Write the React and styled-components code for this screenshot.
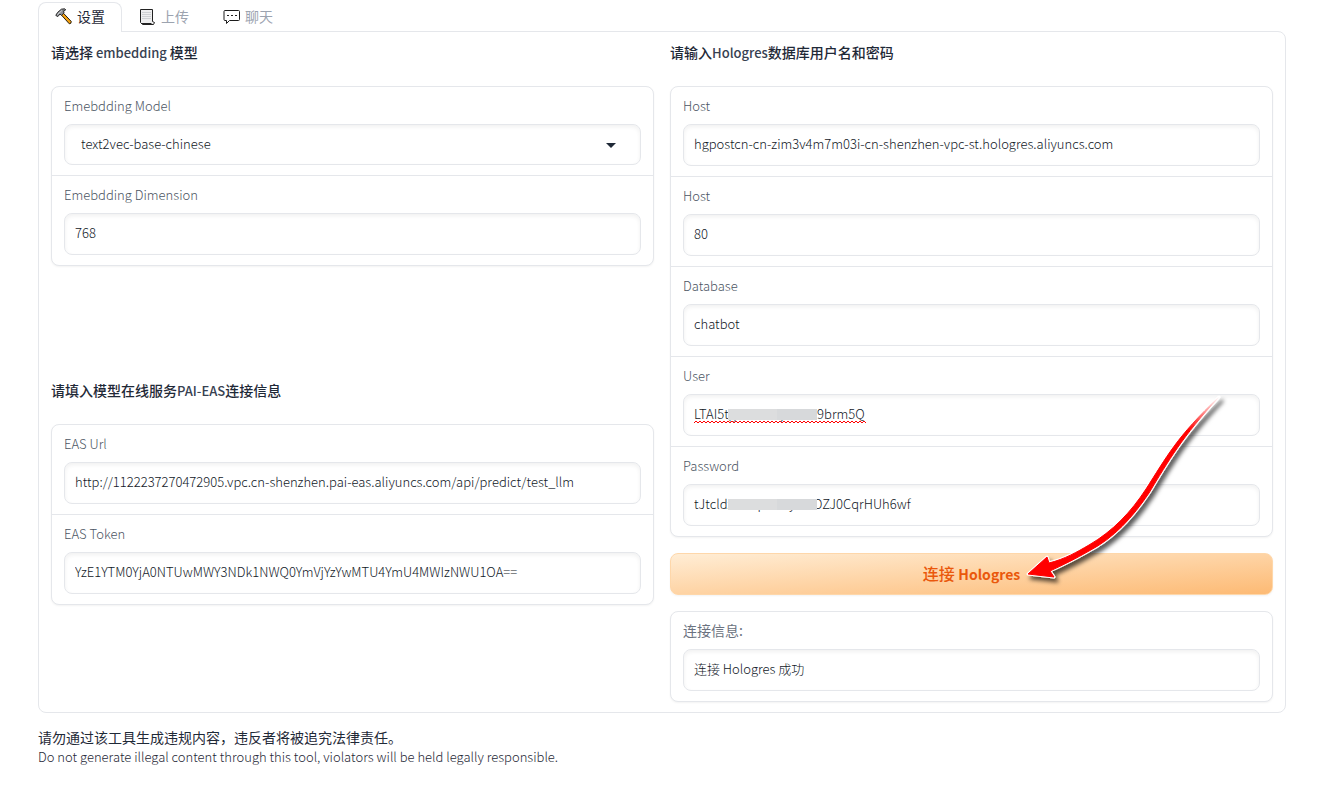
import React from "react";
import styled, { createGlobalStyle, css } from "styled-components";

const Global = createGlobalStyle`
  *, *::before, *::after { box-sizing: border-box; }
  body {
    margin: 0;
    background: #fff;
    color: #1f2937;
    font-family: "Noto Sans CJK SC", "Noto Sans", sans-serif;
    font-size: 14px;
    font-weight: 300;
    line-height: 20px;
  }
  button, input, select { font: inherit; color: inherit; margin: 0; }
`;

const Page = styled.main`
  padding: 2px 48px 32px 38px;
`;

const TabList = styled.div`
  display: flex;
`;

const Tab = styled.button`
  display: flex;
  align-items: center;
  gap: 5px;
  height: 30px;
  padding: 0 16px 3px;
  border: 1px solid ${(p) => (p.$active ? "#e5e7eb" : "transparent")};
  border-bottom: 0;
  border-radius: 8px 8px 0 0;
  background: ${(p) => (p.$active ? "#fff" : "transparent")};
  color: ${(p) => (p.$active ? "#1f2937" : "#9ca3af")};
  font-weight: 400;
  ${(p) => p.$active && css`
    position: relative;
    z-index: 1;
  `}
`;

const Panel = styled.section`
  display: grid;
  grid-template-columns: minmax(0, 1fr) minmax(0, 1fr);
  gap: 16px;
  margin-top: -1px;
  padding: 10px 12px;
  border: 1px solid #e5e7eb;
  border-radius: 0 8px 8px 8px;
`;

const Column = styled.div`
  display: flex;
  flex-direction: column;
  gap: 16px;
`;

const Group = styled.section`
  flex: ${(p) => (p.$grow ? "1 1 0" : "none")};
`;

const Heading = styled.h2`
  margin: 0 0 23px;
  font-size: 14px;
  line-height: 20px;
  font-weight: 500;
`;

const Latin = styled.span`
  font-size: 13px;
  color: #374151;
`;

const Card = styled.div`
  border: 1px solid #e5e7eb;
  border-radius: 8px;
  background: #fff;
  box-shadow: 0 1px 2px rgba(0, 0, 0, 0.05);
`;

const FieldRow = styled.div`
  display: flex;
  flex-direction: column;
  gap: 9px;
  padding: 9px 12px 10px;
  & + & { border-top: 1px solid #e5e7eb; }
`;

const Label = styled.label`
  font-size: ${(p) => (p.$cjk ? 14 : 13)}px;
  font-weight: ${(p) => (p.$cjk ? 400 : 300)};
  line-height: 19px;
  color: ${(p) => (p.$cjk ? "#6b7280" : "#4b5563")};
`;

const Control = styled.div`
  position: relative;
  display: flex;
`;

const box = css`
  width: 100%;
  border: 1px solid #e5e7eb;
  border-radius: 8px;
  background: #fff;
  box-shadow: inset 0 2px 4px rgba(0, 0, 0, 0.06);
  font-size: 13px;
  color: #111827;
  outline: none;
`;

const TextInput = styled.input`
  ${box}
  height: 42px;
  padding: 0 10px 4px;
`;

const Select = styled.select`
  ${box}
  height: 41px;
  padding: 0 16px 2px;
  appearance: none;
`;

const Caret = styled.svg`
  position: absolute;
  right: 25px;
  top: 19px;
  pointer-events: none;
`;

const Mask = styled.span`
  position: absolute;
  left: 45px;
  top: 15px;
  width: 89px;
  height: 11px;
  background: linear-gradient(90deg, #dcddde 0 49px, #d7d9db 49px);
`;

const Squiggle = styled.svg`
  position: absolute;
  left: 11px;
  top: 26px;
  pointer-events: none;
`;

const ActionArea = styled.div`
  position: relative;
  display: flex;
`;

const PrimaryButton = styled.button`
  width: 100%;
  height: 42px;
  padding: 0 0 1px;
  border: 1px solid #fed7aa;
  border-radius: 8px;
  background: linear-gradient(to bottom right, #ffedd5, #fdba74);
  box-shadow: 0 1px 2px rgba(0, 0, 0, 0.05);
  color: #ea580c;
  font-size: 16px;
  font-weight: 500;
`;

const ButtonLatin = styled.span`
  font-size: 14px;
  font-weight: 700;
`;

const Pointer = styled.svg`
  position: absolute;
  right: 42px;
  bottom: -4px;
  pointer-events: none;
`;

const Footer = styled.footer`
  margin-top: 15px;
  line-height: 19px;
  p { margin: 0; }
`;

const FooterCjk = styled.p`
  font-weight: 400;
`;

const FooterLatin = styled.p`
  font-size: 13px;
`;

const HammerIcon = () => (
  <svg width="17" height="17" viewBox="0 0 17 17" aria-hidden="true">
    <path d="M6.2 6.8 8.2 5l8 8.4-.3 1.8-1.6.6z" fill="#f5a210" stroke="#241a0c" strokeWidth="1" strokeLinejoin="round" />
    <path d="M.8 7.4 2.6 4.4 6.4 1.2 9.6.8 10.8 1.8 8.6 2.8 9 5 6.4 7.4 5 6 2.8 8.6z" fill="#8b8f94" stroke="#2b2b2b" strokeWidth="1" strokeLinejoin="round" />
    <path d="M2.4 6.6 6.8 2.6" stroke="#d4d6d8" strokeWidth="1" />
  </svg>
);

const PageIcon = () => (
  <svg width="17" height="17" viewBox="0 0 17 17" aria-hidden="true">
    <path d="M1.500 1.500H13.500V13.500L15.500 14.500 14.500 16.500H3.500L1.500 14.500z" fill="#eeeeef" stroke="#222" strokeWidth="1" strokeLinejoin="round" />
    <path d="M3 4.500h9M3 6.500h9M3 8.500h9M3 10.500h9" stroke="#cfd1d4" strokeWidth="1" />
    <path d="M2.500 15.500h10" fill="none" stroke="#222" strokeWidth="1" />
  </svg>
);

const BubbleIcon = () => (
  <svg width="17" height="17" viewBox="0 0 17 17" aria-hidden="true">
    <path d="M2 2.500h13.500q1 0 1 1v8q0 1-1 1H6.500L3.500 15.500v-3H2q-1 0-1-1v-8q0-1 1-1z" fill="#fff" stroke="#1c1c1c" strokeWidth="1" strokeLinejoin="round" />
    <path d="M4 7.500h2M8 7.500h2M12 7.500h2" stroke="#222" strokeWidth="1" />
  </svg>
);

const ARROW =
  "M9 185 28 168 30 174C46 170 58 163 70 156 94 142 112 123 127 100 147 69 158 47 200 8 163 48 150 71 130 104 114 128 95 149 70 162 58 169 44 176 31 182L35 188Z";

function PointerArrow() {
  return (
    <Pointer width="212" height="210" viewBox="0 0 212 210" aria-hidden="true">
      <defs>
        <filter id="arrow-shadow" x="-10%" y="-10%" width="120%" height="120%">
          <feDropShadow dx="3" dy="4" stdDeviation="2" floodColor="#000" floodOpacity="0.65" />
        </filter>
        <linearGradient id="arrow-fill" gradientUnits="userSpaceOnUse" x1="200" y1="8" x2="170" y2="42">
          <stop offset="0" stopColor="#fff" />
          <stop offset="1" stopColor="#f00" />
        </linearGradient>
      </defs>
      <g filter="url(#arrow-shadow)">
        <path d={ARROW} fill="#fff" stroke="#fff" strokeWidth="3" strokeLinejoin="round" />
      </g>
      <path d={ARROW} fill="url(#arrow-fill)" stroke="url(#arrow-fill)" strokeWidth="1" />
    </Pointer>
  );
}

function Field({ id, label, cjk, children, ...input }) {
  return (
    <FieldRow>
      <Label htmlFor={id} $cjk={cjk}>{label}</Label>
      <Control>
        <TextInput id={id} type="text" spellCheck={false} {...input} />
        {children}
      </Control>
    </FieldRow>
  );
}

export default function App() {
  return (
    <>
      <Global />
      <Page>
        <TabList role="tablist">
          <Tab type="button" role="tab" aria-selected="true" $active><HammerIcon />设置</Tab>
          <Tab type="button" role="tab" aria-selected="false"><PageIcon />上传</Tab>
          <Tab type="button" role="tab" aria-selected="false"><BubbleIcon />聊天</Tab>
        </TabList>
        <Panel role="tabpanel">
          <Column>
            <Group $grow>
              <Heading>请选择<Latin> embedding </Latin>模型</Heading>
              <Card>
                <FieldRow>
                  <Label htmlFor="model">Emebdding Model</Label>
                  <Control>
                    <Select id="model" defaultValue="text2vec-base-chinese">
                      <option>text2vec-base-chinese</option>
                    </Select>
                    <Caret width="10" height="6" viewBox="0 0 10 6" aria-hidden="true">
                      <path d="M0 0h10L5 5z" fill="#1f2937" />
                    </Caret>
                  </Control>
                </FieldRow>
                <Field id="dimension" label="Emebdding Dimension" defaultValue="768" />
              </Card>
            </Group>
            <Group $grow>
              <Heading>请填入模型在线服务<Latin>PAI-EAS</Latin>连接信息</Heading>
              <Card>
                <Field id="eas-url" label="EAS Url" defaultValue="http://1122237270472905.vpc.cn-shenzhen.pai-eas.aliyuncs.com/api/predict/test_llm" />
                <Field id="eas-token" label="EAS Token" defaultValue="YzE1YTM0YjA0NTUwMWY3NDk1NWQ0YmVjYzYwMTU4YmU4MWIzNWU1OA==" />
              </Card>
            </Group>
          </Column>
          <Column>
            <Group>
              <Heading>请输入<Latin>Hologres</Latin>数据库用户名和密码</Heading>
              <Card>
                <Field id="host" label="Host" defaultValue="hgpostcn-cn-zim3v4m7m03i-cn-shenzhen-vpc-st.hologres.aliyuncs.com" />
                <Field id="port" label="Host" defaultValue="80" />
                <Field id="database" label="Database" defaultValue="chatbot" />
                <Field id="user" label="User" defaultValue="LTAI5tgxxxxxxnyxxxxn9brm5Q">
                  <Mask />
                  <Squiggle width="172" height="4" aria-hidden="true">
                    <defs>
                      <pattern id="wave" width="4" height="4" patternUnits="userSpaceOnUse">
                        <path d="M-1 2 0 3 2 1 4 3 5 2" fill="none" stroke="#f00" strokeWidth="1" />
                      </pattern>
                    </defs>
                    <rect width="172" height="4" fill="url(#wave)" />
                  </Squiggle>
                </Field>
                <Field id="password" label="Password" defaultValue="tJtcldxxxxxpxxxxyxmOZJ0CqrHUh6wf">
                  <Mask />
                </Field>
              </Card>
            </Group>
            <ActionArea>
              <PrimaryButton type="button">连接 <ButtonLatin>Hologres</ButtonLatin></PrimaryButton>
              <PointerArrow />
            </ActionArea>
            <Card>
              <Field id="status" label="连接信息:" cjk defaultValue="连接 Hologres 成功" />
            </Card>
          </Column>
        </Panel>
        <Footer>
          <FooterCjk>请勿通过该工具生成违规内容，违反者将被追究法律责任。</FooterCjk>
          <FooterLatin>Do not generate illegal content through this tool, violators will be held legally responsible.</FooterLatin>
        </Footer>
      </Page>
    </>
  );
}
